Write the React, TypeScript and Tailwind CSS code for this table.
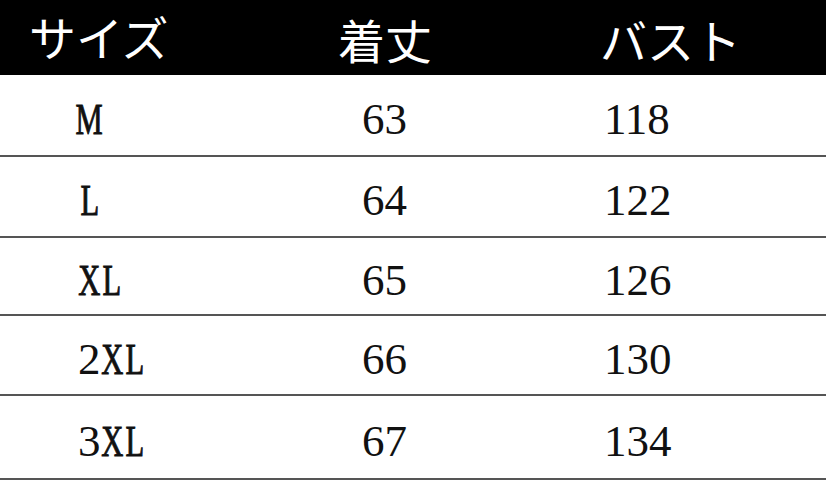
const rows = [
  { size: "M", length: "63", bust: "118", h: "h-[82px]" },
  { size: "L", length: "64", bust: "122", h: "h-[81px]" },
  { size: "XL", length: "65", bust: "126", h: "h-[78px]" },
  { size: "2XL", length: "66", bust: "130", h: "h-[80px]" },
  { size: "3XL", length: "67", bust: "134", h: "h-[84px]" },
];

function SizeLabel({ text }: { text: string }) {
  return (
    <span className="inline-flex">
      {text.split("").map((ch, i) => {
        const isDigit = /[0-9]/.test(ch);
        return (
          <span key={i} className="inline-flex w-[22.5px] justify-center">
            <span
              className={
                isDigit
                  ? "inline-block"
                  : "inline-block scale-x-[0.68] [-webkit-text-stroke:1px_#111]"
              }
            >
              {ch}
            </span>
          </span>
        );
      })}
    </span>
  );
}

export default function App() {
  return (
    <div className="w-[826px] h-[480px] bg-white overflow-hidden">
      <div
        className="flex items-center h-[75px] bg-black text-white text-[47px] leading-none"
        style={{ fontFamily: '"Noto Sans CJK JP", "Noto Sans", sans-serif' }}
      >
        <div className="w-[338px] pl-[29px] -mt-[4px]">サイズ</div>
        <div className="w-[262px] mt-[2px]">着丈</div>
        <div className="flex-1 mt-[2px]">バスト</div>
      </div>
      {rows.map((r) => (
        <div
          key={r.size}
          className={`flex items-center ${r.h} border-b-2 border-[#555] text-[45px] leading-none text-[#111] pt-[8px]`}
          style={{ fontFamily: '"Liberation Serif", "Times New Roman", serif' }}
        >
          <div className="w-[362px] pl-[78px]">
            <SizeLabel text={r.size} />
          </div>
          <div className="w-[242px]">{r.length}</div>
          <div className="flex-1">{r.bust}</div>
        </div>
      ))}
    </div>
  );
}
